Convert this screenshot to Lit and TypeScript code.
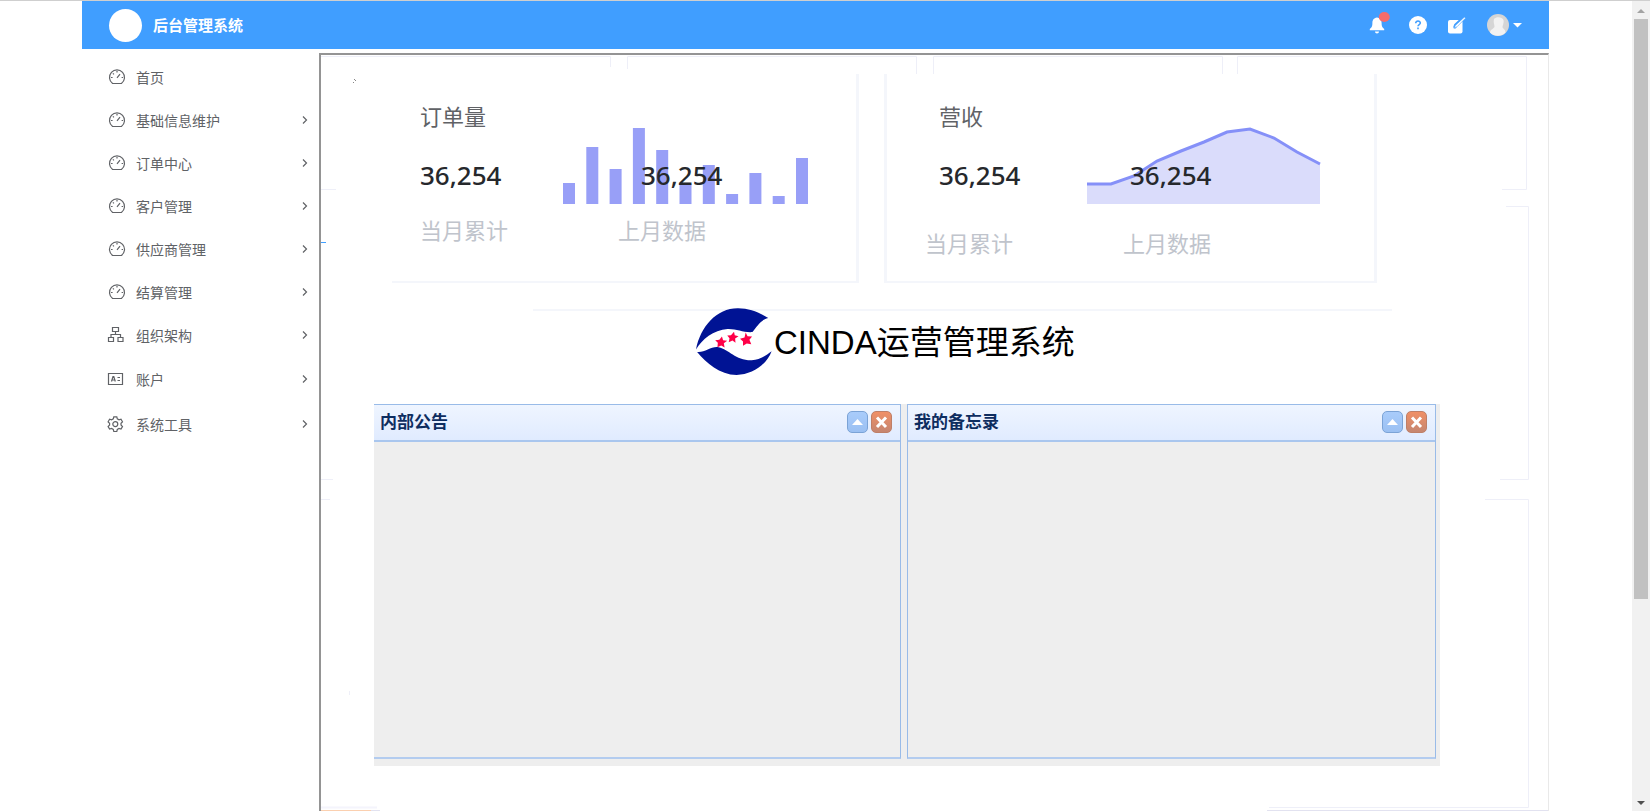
import { LitElement, html, css, svg } from "lit";
import { customElement, property } from "lit/decorators.js";

const icons: Record<string, unknown> = {
  gauge: svg`<path d="M5 15.500h8.400a7.500 7.500 0 1 0-8.800 0z"/><path d="M9 9.800l3-3.600M9 3v1.600M3 9.500h1.600M13.600 9.500H15M4.900 5.300l1 1"/>`,
  org: svg`<path d="M4.500 1.500h6v4h-6zM.5 11.500h5v4h-5zM10 11.500h5v4h-5zM7.500 5.500v3M3 11.500v-3h9.500v3"/>`,
  card: svg`<path d="M.5 3.500h14v11h-14zM3.500 11.500l1.500-5h.8l1.500 5M4 10h3M9.500 7.500H12M9.500 10.500H12"/>`,
  gear: svg`<path d="M5.800 1.800h3l.5 2 1.700 1 2-.6 1.500 2.600-1.500 1.500v1.700l1.500 1.500-1.500 2.600-2-.6-1.700 1-.5 2h-3l-.5-2-1.700-1-2 .6-1.500-2.600L1.600 10V8.300L.1 6.800l1.500-2.600 2 .6 1.700-1z"/><circle cx="7.300" cy="9.100" r="2.500"/>`,
};

@customElement("nav-item")
class NavItem extends LitElement {
  @property() icon = "gauge";
  @property() label = "";
  @property({ type: Boolean }) leaf = false;

  static styles = css`
    :host { display: block; }
    .item {
      display: flex; align-items: center; gap: 10px; box-sizing: border-box;
      width: 100%; height: 100%; padding: 0 10px 0 26px; border: 0; background: none;
      color: #606266; font: 14px/20px "Noto Sans CJK SC", sans-serif;
      text-decoration: none; text-align: left; cursor: pointer;
    }
    .label { flex: 1; }
    svg { fill: none; stroke: currentColor; stroke-width: 1.2; display: block; overflow: visible; }
  `;

  render() {
    const body = html`
      <svg width="18" height="18" viewBox="0 0 18 18" aria-hidden="true">${icons[this.icon]}</svg>
      <span class="label">${this.label}</span>`;
    return this.leaf
      ? html`<a class="item" href="#home">${body}</a>`
      : html`<button class="item" type="button">${body}
          <svg width="8" height="10" viewBox="0 0 8 10" aria-hidden="true"><path d="M2 1.500L5.500 5 2 8.500"/></svg>
        </button>`;
  }
}

@customElement("stat-card")
class StatCard extends LitElement {
  @property() heading = "";
  @property() kind = "bars";

  static styles = css`
    :host { display: block; box-sizing: border-box; border: solid #f4f6fb; border-width: 0 3px 2px 0; font-family: "Noto Sans CJK SC", sans-serif; }
    :host([kind="area"]) { border-left-width: 3px; }
    .body { padding: 31px 0 0 28px; }
    .area { padding-left: 52px; }
    h2 { margin: 0 0 2px; font-size: 22px; line-height: 20px; font-weight: 400; color: #606266; }
    .figures { display: grid; grid-template-columns: 143px 1fr; height: 77px; }
    .area .figures { grid-template-columns: 148px 1fr; }
    .value { padding-top: 33px; font: 500 26px/30px "Noto Sans", sans-serif; color: #26282c; }
    .last, .chart { grid-area: 1 / 2; }
    .last { z-index: 1; padding-left: 78px; }
    .area .last { padding-left: 43px; }
    .chart { display: block; }
    .labels { display: grid; grid-template-columns: 198px 1fr; margin-top: 13px; font-size: 22px; line-height: 24px; color: #c0c4cc; }
    .area .labels { margin: 26px 0 0 -14px; }
  `;

  render() {
    const heights = [21, 57, 35, 76, 54, 20, 39, 10, 31, 8, 46];
    const chart = this.kind === "bars"
      ? html`<svg class="chart" width="246" height="77" aria-hidden="true">
          ${heights.map((h, i) => svg`<rect x=${i * 23.3} y=${77 - h} width="12" height=${h} fill="#989ff7"/>`)}
        </svg>`
      : html`<svg class="chart" width="235" height="77" aria-hidden="true">
          <path fill="#dadcfb" d="M0 57L24 57 47 49 70 34 94 24 117 15 140 5 163 2 187 11 210 25 233 37V77H0z"/>
          <path fill="none" stroke="#8590f8" stroke-width="3" d="M0 57L24 57 47 49 70 34 94 24 117 15 140 5 163 2 187 11 210 25 233 37"/>
        </svg>`;
    return html`<div class="body ${this.kind}">
      <h2>${this.heading}</h2>
      <div class="figures"><span class="value">36,254</span>${chart}<span class="value last">36,254</span></div>
      <div class="labels"><span>当月累计</span><span>上月数据</span></div>
    </div>`;
  }
}

@customElement("notice-panel")
class NoticePanel extends LitElement {
  @property() heading = "";

  static styles = css`
    :host { display: flex; flex-direction: column; box-sizing: border-box; border: 1px solid #99bbe8; border-bottom: 2px solid #b3ccef; background: #eee; }
    header {
      display: flex; align-items: center; gap: 3px; box-sizing: border-box; height: 37px; padding: 0 8px 2px 6px;
      border-bottom: 2px solid #a9c6ee; background: linear-gradient(#eff5ff, #e0ebff);
    }
    h2 { flex: 1; margin: 0 0 2px; color: #0e2d5f; font: 700 17px/20px "Noto Sans CJK SC", sans-serif; }
    button { width: 21px; height: 22px; padding: 0; border: 1px solid #7ba3d6; border-radius: 5px; background: linear-gradient(#a9ccfb, #9bc0f2); }
    .close { border-color: #bf7f67; background: linear-gradient(#f09066, #c58670); }
    svg { display: block; margin: auto; }
  `;

  render() {
    return html`<header>
      <h2>${this.heading}</h2>
      <button type="button" aria-label="收起"><svg width="19" height="20"><path d="M4 13l5.500-6 5.500 6z" fill="#fff"/></svg></button>
      <button type="button" class="close" aria-label="关闭"><svg width="19" height="20"><path d="M5 5.500l9 9.500M14 5.500l-9 9.500" stroke="#fff" stroke-width="3"/></svg></button>
    </header>`;
  }
}

@customElement("app-root")
class AppRoot extends LitElement {
  static styles = css`
    :host { display: flex; flex-direction: column; box-sizing: border-box; height: 100vh; overflow: hidden; border-top: 1px solid #cfcfcf; background: #fff; font-family: "Noto Sans CJK SC", sans-serif; }
    .window { display: flex; flex: 1; min-height: 0; }
    .shell { display: flex; flex-direction: column; flex: 1; min-width: 0; padding: 0 83px 0 82px; }
    .topbar { display: flex; align-items: center; justify-content: space-between; box-sizing: border-box; height: 48px; padding: 0 27px; background: #409eff; color: #fff; }
    .brand { display: flex; align-items: center; gap: 11px; }
    .mark { width: 33px; height: 33px; border-radius: 50%; background: #fff; }
    h1 { margin: 0; font-size: 15px; line-height: 20px; font-weight: 700; }
    .tools { display: flex; align-items: center; gap: 21px; }
    .tools button { display: flex; align-items: center; gap: 4px; padding: 0; border: 0; background: none; color: #fff; }
    .tools svg { display: block; overflow: visible; }
    .main { display: flex; flex: 1; min-height: 0; padding-top: 4px; }
    nav { width: 237px; flex: none; padding-top: 2px; }
    .row { height: 43px; }
    .tall { height: 45px; }
    .frame { position: relative; flex: 1; min-width: 0; border: solid; border-width: 2px 1px 0 2px; border-color: #949494 #e9e9e9 #fff #949494; }
    .outlines { position: absolute; inset: 0; width: 100%; height: 100%; }
    .content { position: relative; padding-top: 19px; }
    .cards { display: grid; grid-template-columns: 467fr 493fr; gap: 25px; padding: 0 171px 0 71px; }
    stat-card { min-height: 209px; }
    .product { display: flex; align-items: center; gap: 2px; height: 66px; padding: 25px 0 30px 375px; }
    .product p { margin: 0; padding-top: 3px; color: #000; font: 33px/40px "Liberation Sans", "Noto Sans CJK SC", sans-serif; white-space: nowrap; }
    .panels { display: grid; grid-template-columns: 526fr 528fr; gap: 6px; margin: 0 108px 0 53px; padding: 0 4px 7px 0; background: #eee; }
    notice-panel { min-height: 355px; }
    .first { border-left: 0; }
    .scroll { display: flex; flex-direction: column; align-items: center; width: 18px; background: #f1f1f1; }
    .thumb { width: 14px; flex: 0 0 580px; background: #c1c1c1; }
    .space { flex: 1; }
    .scroll svg { display: block; }
  `;

  render() {
    const groups = [
      ["gauge", "基础信息维护"], ["gauge", "订单中心"], ["gauge", "客户管理"],
      ["gauge", "供应商管理"], ["gauge", "结算管理"], ["org", "组织架构"],
      ["card", "账户"], ["gear", "系统工具"],
    ];
    return html`<div class="window">
      <div class="shell">
        <header class="topbar">
          <div class="brand"><span class="mark"></span><h1>后台管理系统</h1></div>
          <div class="tools">
            <button type="button" aria-label="通知"><svg width="20" height="18" viewBox="0 0 20 18">
              <path fill="#fff" d="M9 1.500c3.400.4 4.600 2.700 4.600 5.500 0 3 .4 4.300 2.600 6v1.300H1.800V13c2.200-1.700 2.600-3 2.600-6C4.400 4.200 5.600 1.900 9 1.500zM7 15.500h4c0 1.200-.9 2-2 2s-2-.8-2-2z"/>
              <ellipse cx="16.300" cy="1" rx="5.500" ry="5" fill="#f56c6c"/></svg></button>
            <button type="button" aria-label="帮助"><svg width="18" height="18" viewBox="0 0 18 18">
              <circle cx="9" cy="9" r="9" fill="#fff"/><path d="M6.700 7.200c0-3 4.700-2.700 4.600-.2 0 1.500-2.300 1.600-2.300 3.300M9 11.600v1.700" fill="none" stroke="#409eff" stroke-width="1.600"/></svg></button>
            <button type="button" aria-label="编辑"><svg width="18" height="18" viewBox="0 0 18 18">
              <rect x="0" y="4" width="14.500" height="13.500" rx="2" fill="#fff"/><path d="M6.500 12l1-3 8-7.500" fill="none" stroke="#409eff" stroke-width="3"/><path d="M6 12.500l1.500-3.300 9-8.200 1 1.200-8.500 8.600z" fill="#fff" stroke="#409eff" stroke-width=".6"/></svg></button>
            <button type="button" aria-label="用户"><svg width="22" height="22" viewBox="0 0 22 22">
              <circle cx="11" cy="11" r="11" fill="#d5d5d5"/><path fill="#f2f2f2" d="M7 5c2-2.500 8-2.500 9.500 1 .8 2.500-1 5.500-1 7s3 2.500 3 5.500A11 11 0 0 1 3 18.500c0-3 4.500-4 4.500-6S6 8 7 5z"/></svg>
              <svg width="9" height="5"><path d="M0 0h9L4.500 4.500z" fill="#fff"/></svg></button>
          </div>
        </header>
        <div class="main">
          <nav>
            <nav-item class="row" leaf icon="gauge" label="首页"></nav-item>
            ${groups.map(([icon, label], i) => html`<nav-item class=${i > 5 ? "tall" : "row"} icon=${icon} label=${label}></nav-item>`)}
          </nav>
          <section class="frame">
            <svg class="outlines" viewBox="0 0 1227 756" preserveAspectRatio="none" fill="none" stroke="#eeeff8" aria-hidden="true">
              <path d="M0 1.500H289.500V12M306.500 14V1.500H595.500V19M612.500 19V1.500H901.500V19M916.500 19V1.500H1205.500V134.500H1181M1185 151.500H1207.500V424.500H1179M1164 444.500H1207.500V752.500H948M0 134.500H15M0 424.500H12M0 444.500H9M28.500 636v4"/>
              <path d="M212 255H1071" stroke="#f4f6fb" stroke-width="2"/>
              <path d="M0 752.500H56" stroke="#f4f4fc" stroke-width="2"/>
              <path d="M50 755.500H59M946 755.500H1227" stroke="#e2e2f0"/>
              <path d="M0 755.500H50" stroke="#fbd0b0"/>
              <path d="M0 187.500H5" stroke="#409eff"/>
              <path d="M32 27.500h1M34 25.500h1M33 24.500h1" stroke="#888"/>
            </svg>
            <div class="content">
              <div class="cards">
                <stat-card kind="bars" heading="订单量"></stat-card>
                <stat-card kind="area" heading="营收"></stat-card>
              </div>
              <div class="product">
                <svg width="76" height="67" viewBox="476 50 202 200" preserveAspectRatio="none" aria-hidden="true">
                  <path fill="#001394" d="M476 174C488 105 532 50 588 51c30 0 56 12 80 29-20 5-30 26-42 42-24 2-42-10-66-9-38 3-68 31-84 61zM479 181c20 3 38-18 57-14 28 6 45 40 88 39 25-2 40-16 53-27-12 38-50 70-93 71-46-2-80-36-105-69z"/>
                  <path fill="#ff0048" d="M545 135l3 11 11 2-9 7 2 13-9-6-10 5 1-13-7-8 11-1zM577 121l2 10 10 3-9 7 1 13-8-7-10 5 2-12-6-8 10-1zM608 123l5 11 12 1-7 10 5 13-12-2-10 7v-13l-8-8 12-4z"/>
                </svg>
                <p>CINDA运营管理系统</p>
              </div>
              <div class="panels">
                <notice-panel class="first" heading="内部公告"></notice-panel>
                <notice-panel heading="我的备忘录"></notice-panel>
              </div>
            </div>
          </section>
        </div>
      </div>
      <div class="scroll" aria-hidden="true">
        <svg width="18" height="18"><path d="M5 12h8l-4-4z" fill="#a3a3a3"/></svg>
        <div class="thumb"></div><div class="space"></div>
        <svg width="18" height="18"><path d="M5 8h8l-4 4z" fill="#505050"/></svg>
      </div>
    </div>`;
  }
}
